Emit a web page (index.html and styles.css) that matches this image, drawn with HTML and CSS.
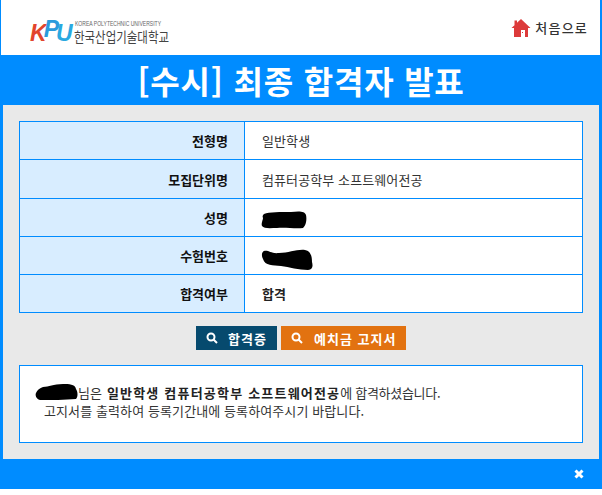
FILE: index.html
```html
<!DOCTYPE html>
<html lang="ko">
<head>
<meta charset="utf-8">
<title>최종 합격자 발표</title>
<link rel="stylesheet" href="styles.css">
</head>
<body>
<div class="window">
  <header class="top">
    <div class="logo">
      <div class="logo-mark"><span class="k">K</span><span class="p">P</span><span class="u">U</span></div>
      <div class="logo-text">
        <svg class="logo-line" width="140" height="8" viewBox="0 0 140 8"><text class="logo-en" x="2" y="6.500" textLength="86" lengthAdjust="spacingAndGlyphs">KOREA POLYTECHNIC UNIVERSITY</text></svg>
        <svg class="logo-line" width="140" height="21" viewBox="0 0 140 21"><text class="logo-ko" x="1" y="14.500" textLength="95" lengthAdjust="spacingAndGlyphs">한국산업기술대학교</text></svg>
      </div>
    </div>
    <a class="home">
      <svg class="home-icon" width="20" height="20" viewBox="0 0 20 20">
        <path fill="#dc3a3a" d="M10 1 19.500 10H17V19H3V10H.5L3.500 7.200V2.500H6V4.800Z"/>
        <rect x="10" y="12" width="4" height="7" fill="#fff"/>
        <rect x="11" y="14" width="1" height="1" fill="#dc3a3a"/>
      </svg>
      <span>처음으로</span>
    </a>
  </header>
  <h1 class="title">[수시] 최종 합격자 발표</h1>
  <main class="content">
    <div class="info">
      <div class="row"><div class="label">전형명</div><div class="value">일반학생</div></div>
      <div class="row row-tall"><div class="label">모집단위명</div><div class="value">컴퓨터공학부 소프트웨어전공</div></div>
      <div class="row"><div class="label">성명</div><div class="value">
        <svg class="blob blob-name" width="46" height="18" viewBox="0 0 46 18"><path d="M3 3C8 1 20 1 30 1 38 0 44 0 45 4 46 9 45 14 42 17 34 18 24 16 16 17 10 17 3 18 1 15 0 12 2 9 2 7 1 5 2 4 3 3Z"/></svg>
      </div></div>
      <div class="row"><div class="label">수험번호</div><div class="value">
        <svg class="blob blob-number" width="52" height="22" viewBox="0 0 52 22"><path d="M3 2C8 1 10 5 18 4 28 4 36 0 44 1 50 2 51 8 51 13 52 17 52 20 47 21 38 21 28 18 20 17 12 16 4 17 2 10 0 6 1 3 3 2Z"/></svg>
      </div></div>
      <div class="row row-last"><div class="label">합격여부</div><div class="value strong">합격</div></div>
    </div>
    <div class="actions">
      <a class="btn btn-navy">
        <svg class="search" width="12" height="12" viewBox="0 0 12 12"><circle cx="5" cy="5" r="3.500"/><path d="M7.500 7.500 11 11"/></svg>
        <span>합격증</span>
      </a>
      <a class="btn btn-orange">
        <svg class="search" width="12" height="12" viewBox="0 0 12 12"><circle cx="5" cy="5" r="3.500"/><path d="M7.500 7.500 11 11"/></svg>
        <span>예치금 고지서</span>
      </a>
    </div>
    <div class="notice">
      <p class="line-first"><svg class="blob blob-inline" width="43" height="17" viewBox="0 0 43 17"><path d="M8 3C14 3 18 0 28 0 34 0 40 0 41 5 43 8 43 13 41 15 30 16 16 16 5 16 1 15 0 11 1 9 2 6 5 4 8 3Z"/></svg>님은 <b>일반학생 컴퓨터공학부 소프트웨어전공</b><span class="tail">에 합격하셨습니다.</span></p>
      <p class="line-second">고지서를 출력하여 등록기간내에 등록하여주시기 바랍니다.</p>
    </div>
  </main>
  <footer class="bottom">
    <svg class="close" width="10" height="10" viewBox="0 0 10 10" aria-label="닫기"><path d="M1.500 1.500 8.500 8.500M8.500 1.500 1.500 8.500"/></svg>
  </footer>
</div>
</body>
</html>
```

FILE: styles.css
```css
* { box-sizing: border-box; }
html, body { margin: 0; padding: 0; background: #fff; }
body { font-family: "Noto Sans CJK KR", "Noto Sans", sans-serif; }

.window { width: 602px; height: 489px; background: #008cff; display: flex; flex-direction: column; overflow: hidden; }

.top {
  height: 55px; background: #fff; margin: 0 2px 0 1px;
  display: flex; justify-content: space-between; align-items: center;
  padding: 0 12px 0 29px;
}
.logo { display: flex; align-items: flex-start; gap: 1px; margin-top: 12px; }
.logo-mark { font: italic 700 23px/24px "Liberation Sans", sans-serif; letter-spacing: -3px; display: flex; width: 42px; margin-top: 2px; }
.k { color: #e2452c; }
.p { color: #2a9bdc; margin-top: -4px; }
.u { color: #2aa9e0; }
.logo-text { display: flex; flex-direction: column; }
.logo-line { display: block; }
.logo-en { font: 6.500px "Liberation Sans", sans-serif; fill: #666; }
.logo-ko { font-size: 14px; fill: #444; }

.home { display: flex; align-items: center; gap: 4px; font-size: 13px; color: #333; letter-spacing: 1.200px; font-weight: 500; }
.home-icon { display: block; }

.title {
  margin: 0; height: 50px; color: #fff; text-align: center;
  font-size: 32px; line-height: 50px; font-weight: 700; letter-spacing: .800px;
}

.content { height: 354px; margin: 0 3px; background: #e9e9e9; padding: 16px 16px 0; }

.info { background: #fff; border: 1px solid #008cff; }
.row { display: flex; height: 38px; border-bottom: 1px solid #008cff; }
.row-tall { height: 39px; }
.row-last { height: 37px; border-bottom: 0; }
.label {
  width: 225px; background: #d8edff; border-right: 1px solid #008cff;
  display: flex; align-items: center; justify-content: flex-end;
  padding-right: 16px; font-size: 13px; font-weight: 700; color: #111;
}
.value {
  flex: 1; display: flex; align-items: center; padding-left: 17px;
  font-size: 13px; letter-spacing: .1px; color: #333;
}
.strong { font-weight: 700; color: #222; }
.blob { display: block; fill: #000; }
.blob-name { margin: 4px 0 0 -1px; }
.blob-number { margin: 8px 0 0 -1px; }

.actions { display: flex; justify-content: center; gap: 4px; margin-top: 13px; }
.btn {
  height: 24px; display: flex; align-items: center; color: #fff;
  font-size: 13px; font-weight: 700; letter-spacing: 1px;
}
.btn-navy { width: 81px; background: #064a6e; padding-left: 10px; gap: 10px; }
.btn-orange { width: 125px; background: #e27210; padding-left: 10px; gap: 11px; }
.search { flex: none; fill: none; stroke: #fff; stroke-width: 2; }

.notice {
  margin-top: 15px; height: 78px; background: #fff; border: 1px solid #008cff;
  padding-top: 18px; font-size: 13px; line-height: 18px; letter-spacing: .1px; color: #333;
}
.notice p { margin: 0; white-space: nowrap; }
.notice b { color: #222; letter-spacing: 1.200px; margin-left: 1px; }
.tail { letter-spacing: -.3px; }
.line-first { padding-left: 15px; }
.blob-inline { display: inline-block; vertical-align: -3px; }
.line-second { padding-left: 24px; }

.bottom { flex: 1; display: flex; align-items: center; justify-content: flex-end; padding-right: 18px; }
.close { fill: none; stroke: #fff; stroke-width: 3; }
```
